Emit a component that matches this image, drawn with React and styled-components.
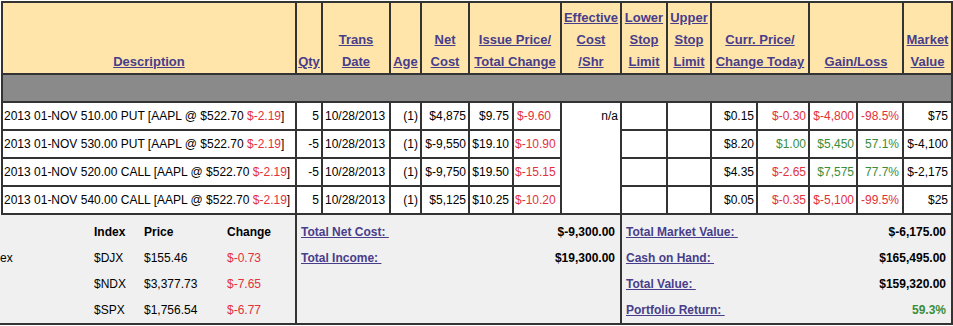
import React from "react";
import styled, { createGlobalStyle } from "styled-components";

const Global = createGlobalStyle`
  html, body { margin: 0; padding: 0; background: #ffffff; }
  body { font-family: "Liberation Sans", Arial, sans-serif; }
`;

const COLS = [292, 24, 66, 29, 46, 42, 46, 58, 44, 42, 44, 50, 46, 44, 47];
const RED = "#e2313b";
const GREEN = "#3a8d3a";
const LINK = "#483d8b";
const LINE = "#333333";

const Page = styled.div`
  padding-top: 1px;
  width: 953px;
`;

const Grid = styled.div`
  margin-left: 1px;
  width: 948px;
  display: grid;
  grid-template-columns: ${COLS.map((w) => w + "px").join(" ")};
  grid-template-rows: 70px 26px repeat(4, 26px);
  gap: 2px;
  background: ${LINE};
  border: 2px solid ${LINE};
`;

const HeadCell = styled.div`
  grid-column: span ${(p) => p.$span || 1};
  background: #ffe5aa;
  display: flex;
  flex-direction: column;
  justify-content: flex-end;
  align-items: center;
  text-align: center;
  font-size: 13px;
  font-weight: bold;
  line-height: 22px;
  white-space: nowrap;
`;

const HeadLink = styled.a`
  color: ${LINK};
  text-decoration: underline;
  cursor: pointer;
`;

const Band = styled.div`
  grid-column: 1 / -1;
  background: #8a8a8a;
`;

const Cell = styled.div`
  background: #ffffff;
  font-size: 12px;
  line-height: 26px;
  white-space: nowrap;
  overflow: hidden;
  color: ${(p) => p.$color || "#000"};
  text-align: ${(p) => p.$align || "right"};
  padding: 0 ${(p) => p.$pr ?? 2}px 0 ${(p) => p.$pl ?? 1}px;
`;

const SpanCell = styled(Cell)`
  grid-column: 8;
  grid-row: 3 / span 4;
`;

const Red = styled.span`
  color: ${RED};
`;

const Summary = styled.div`
  display: grid;
  grid-template-columns: 295px 323px 329px;
  column-gap: 2px;
  background: ${LINE};
  border-right: 2px solid ${LINE};
  border-bottom: 2px solid ${LINE};
  width: 951px;
`;

const Section = styled.div`
  background: #f0f0f0;
  height: 108px;
  box-sizing: border-box;
  padding-top: 4px;
  display: grid;
  grid-template-columns: ${(p) => p.$cols};
  grid-auto-rows: 26px;
  align-items: center;
  font-size: 12px;
`;

const IdxText = styled.div`
  color: ${(p) => p.$color || "#000"};
  font-weight: ${(p) => (p.$bold ? "bold" : "normal")};
  white-space: nowrap;
`;

const SumLabel = styled.a`
  justify-self: start;
  padding-left: ${(p) => p.$pl}px;
  color: ${LINK};
  font-weight: bold;
  text-decoration: underline;
  white-space: pre;
  cursor: pointer;
`;

const SumValue = styled.div`
  text-align: right;
  padding-right: ${(p) => p.$pr}px;
  font-weight: bold;
  color: ${(p) => p.$color || "#000"};
`;

const headers = [
  { lines: ["Description"] },
  { lines: ["Qty"] },
  { lines: ["Trans", "Date"] },
  { lines: ["Age"] },
  { lines: ["Net", "Cost"] },
  { lines: ["Issue Price/", "Total Change"], span: 2 },
  { lines: ["Effective", "Cost", "/Shr"] },
  { lines: ["Lower", "Stop", "Limit"] },
  { lines: ["Upper", "Stop", "Limit"] },
  { lines: ["Curr. Price/", "Change Today"], span: 2 },
  { lines: ["Gain/Loss"], span: 2 },
  { lines: ["Market", "Value"] },
];

const rows = [
  {
    desc: "2013 01-NOV 510.00 PUT",
    qty: "5", cost: "$4,875", issue: "$9.75", tchg: ["$-9.60", RED],
    curr: "$0.15", today: ["$-0.30", RED], gain: ["$-4,800", RED], pct: ["-98.5%", RED], mkt: "$75",
  },
  {
    desc: "2013 01-NOV 530.00 PUT",
    qty: "-5", cost: "$-9,550", issue: "$19.10", tchg: ["$-10.90", RED],
    curr: "$8.20", today: ["$1.00", GREEN], gain: ["$5,450", GREEN], pct: ["57.1%", GREEN], mkt: "$-4,100",
  },
  {
    desc: "2013 01-NOV 520.00 CALL",
    qty: "-5", cost: "$-9,750", issue: "$19.50", tchg: ["$-15.15", RED],
    curr: "$4.35", today: ["$-2.65", RED], gain: ["$7,575", GREEN], pct: ["77.7%", GREEN], mkt: "$-2,175",
  },
  {
    desc: "2013 01-NOV 540.00 CALL",
    qty: "5", cost: "$5,125", issue: "$10.25", tchg: ["$-10.20", RED],
    curr: "$0.05", today: ["$-0.35", RED], gain: ["$-5,100", RED], pct: ["-99.5%", RED], mkt: "$25",
  },
];

const indices = [
  ["ex", "$DJX", "$155.46", "$-0.73"],
  ["", "$NDX", "$3,377.73", "$-7.65"],
  ["", "$SPX", "$1,756.54", "$-6.77"],
];

export default function App() {
  return (
    <Page>
      <Global />
      <Grid>
        {headers.map((h, i) => (
          <HeadCell key={i} $span={h.span}>
            {h.lines.map((l, j) => (
              <HeadLink key={j}>{l}</HeadLink>
            ))}
          </HeadCell>
        ))}
        <Band />
        <SpanCell $pr={2}>n/a</SpanCell>
        {rows.map((r, i) => (
          <React.Fragment key={i}>
            <Cell $align="left" $pl={1}>
              {r.desc} [AAPL @ $522.70 <Red>$-2.19</Red>]
            </Cell>
            <Cell>{r.qty}</Cell>
            <Cell $align="left" $pl={2}>10/28/2013</Cell>
            <Cell>(1)</Cell>
            <Cell>{r.cost}</Cell>
            <Cell $pr={3}>{r.issue}</Cell>
            <Cell $pr={9} $color={r.tchg[1]}>{r.tchg[0]}</Cell>
            <Cell />
            <Cell />
            <Cell>{r.curr}</Cell>
            <Cell $color={r.today[1]}>{r.today[0]}</Cell>
            <Cell $color={r.gain[1]}>{r.gain[0]}</Cell>
            <Cell $pr={3} $color={r.pct[1]}>{r.pct[0]}</Cell>
            <Cell $pr={3}>{r.mkt}</Cell>
          </React.Fragment>
        ))}
      </Grid>
      <Summary>
        <Section $cols="94px 50px 83px 1fr">
          <IdxText />
          <IdxText $bold>Index</IdxText>
          <IdxText $bold>Price</IdxText>
          <IdxText $bold>Change</IdxText>
          {indices.map((r, i) => (
            <React.Fragment key={i}>
              <IdxText>{r[0]}</IdxText>
              <IdxText>{r[1]}</IdxText>
              <IdxText>{r[2]}</IdxText>
              <IdxText $color={RED}>{r[3]}</IdxText>
            </React.Fragment>
          ))}
        </Section>
        <Section $cols="1fr auto">
          <SumLabel $pl={4}>{"Total Net Cost: "}</SumLabel>
          <SumValue $pr={5}>$-9,300.00</SumValue>
          <SumLabel $pl={4}>{"Total Income: "}</SumLabel>
          <SumValue $pr={5}>$19,300.00</SumValue>
        </Section>
        <Section $cols="1fr auto">
          <SumLabel $pl={4}>{"Total Market Value: "}</SumLabel>
          <SumValue $pr={5}>$-6,175.00</SumValue>
          <SumLabel $pl={4}>{"Cash on Hand: "}</SumLabel>
          <SumValue $pr={5}>$165,495.00</SumValue>
          <SumLabel $pl={4}>{"Total Value: "}</SumLabel>
          <SumValue $pr={5}>$159,320.00</SumValue>
          <SumLabel $pl={4}>{"Portfolio Return: "}</SumLabel>
          <SumValue $pr={5} $color={GREEN}>59.3%</SumValue>
        </Section>
      </Summary>
    </Page>
  );
}
